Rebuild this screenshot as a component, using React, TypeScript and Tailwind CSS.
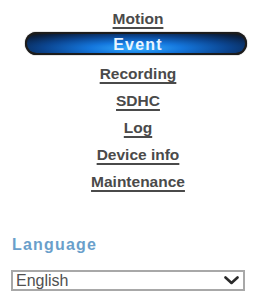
import React from "react";

const items = ["Recording", "SDHC", "Log", "Device info", "Maintenance"];

export default function App() {
  return (
    <div className="w-[254px] h-[299px] bg-white overflow-hidden" style={{ fontFamily: '"Liberation Sans", Arial, sans-serif' }}>
      <div className="ml-[25px] w-[222px] pt-[6px] flex flex-col">
        <div className="h-[26px] flex items-center justify-center pl-[4px]">
          <a className="text-[15.5px] font-bold text-[#4a4a4a] underline decoration-[1.5px] underline-offset-[3px] cursor-pointer">Motion</a>
        </div>
        <div className="h-[23px] rounded-full bg-[#1c1c1c] p-[2px] shadow-[0_0_1px_#000]">
          <div className="h-full rounded-full bg-[radial-gradient(ellipse_at_50%_75%,#35adff_0%,#1476dc_30%,#0b4590_60%,#0a2246_85%,#161616_100%)] flex items-center justify-center pt-[3px] pl-[4px]">
            <span className="text-[16px] font-bold text-[#eaf5ff] tracking-[1.2px] leading-none">Event</span>
          </div>
        </div>
        <div className="mt-[5px] flex flex-col">
          {items.map((t) => (
            <div key={t} className="h-[27px] flex items-center justify-center pl-[4px]">
              <a className="text-[15.5px] font-bold text-[#4a4a4a] underline decoration-[1.5px] underline-offset-[3px] cursor-pointer">{t}</a>
            </div>
          ))}
        </div>
      </div>
      <div className="pl-[12px] mt-[40px]">
        <div className="text-[16px] font-bold text-[#6a9fcb] tracking-[1.2px] leading-[19px]">Language</div>
        <div className="mt-[16px] ml-[-1px] w-[234px] h-[21px] border-2 border-[#a8a8a8] flex items-center justify-between pl-[3px] pr-[4px]">
          <span className="text-[16px] text-[#505050] leading-none">English</span>
          <svg width="15" height="9" viewBox="0 0 15 9">
            <path d="M1.5 1.5 L7.5 7 L13.5 1.5" fill="none" stroke="#2a2a2a" strokeWidth="2.6" strokeLinecap="round" strokeLinejoin="round" />
          </svg>
        </div>
      </div>
    </div>
  );
}
